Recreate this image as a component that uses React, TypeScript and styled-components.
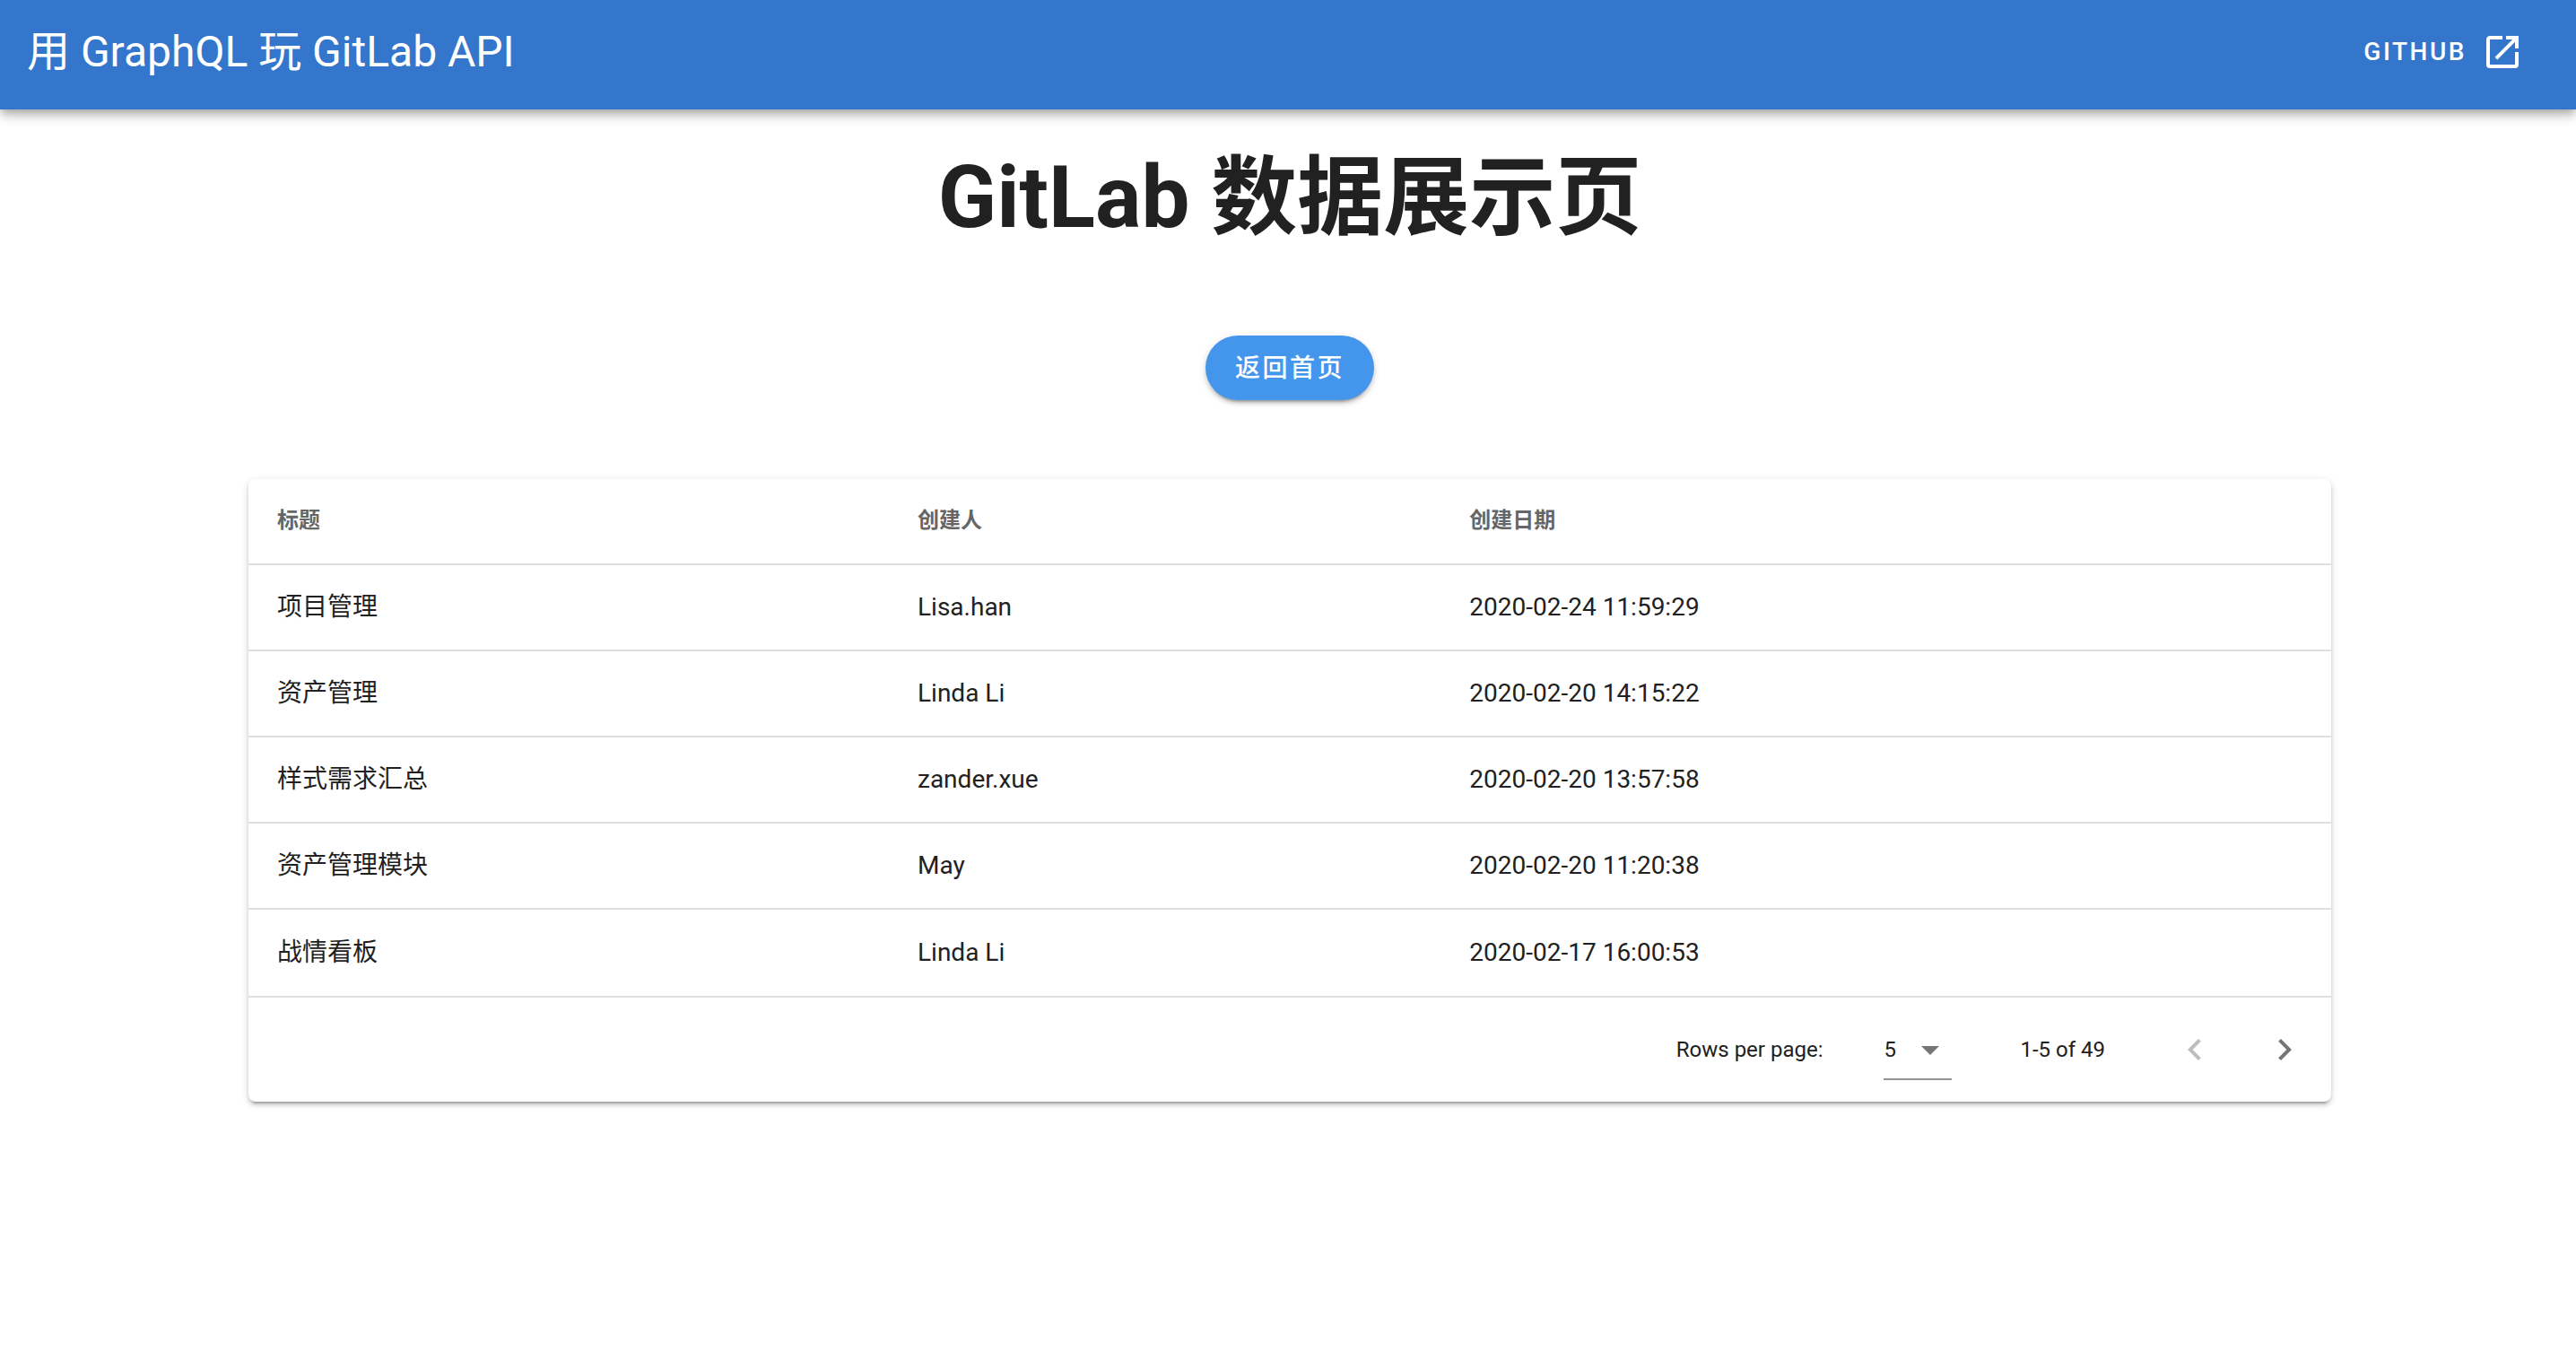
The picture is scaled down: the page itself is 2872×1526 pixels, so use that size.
import React, { useState } from "react";
import styled, { createGlobalStyle } from "styled-components";

const GlobalStyle = createGlobalStyle`
  *, *::before, *::after { box-sizing: border-box; }
  body {
    margin: 0;
    background: #fff;
    color: #212121;
    font-family: Roboto, "Noto Sans CJK SC", sans-serif;
    font-size: 28px;
    line-height: 42px;
  }
`;

const AppBar = styled.header`
  display: flex;
  align-items: center;
  justify-content: space-between;
  height: 122px;
  padding: 0 26px 6px 30px;
  background: #3476cc;
  color: #fff;
  box-shadow:
    0 4px 8px -2px rgba(0, 0, 0, 0.2),
    0 8px 10px 0 rgba(0, 0, 0, 0.14),
    0 2px 20px 0 rgba(0, 0, 0, 0.12);
`;

const AppTitle = styled.div`
  font-size: 48px;
  line-height: 64px;
  font-weight: 400;
`;

const BarLink = styled.a`
  display: flex;
  align-items: center;
  gap: 16px;
  height: 72px;
  padding: 0 32px;
  color: inherit;
  font-weight: 500;
  letter-spacing: 0.09em;
  text-decoration: none;
  text-transform: uppercase;
`;

const Icon = styled.svg`
  display: block;
  width: 48px;
  height: 48px;
  fill: currentColor;
`;

const Main = styled.main`
  display: flex;
  flex-direction: column;
  align-items: center;
  padding: 26px 24px 24px 28px;
`;

const PageTitle = styled.h1`
  margin: 0;
  font-size: 96px;
  line-height: 144px;
  font-weight: 700;
  text-align: center;
`;

const HomeButton = styled.button`
  min-width: 188px;
  height: 72px;
  margin: 82px 0 88px;
  padding: 2px 32px 0;
  border: 0;
  border-radius: 36px;
  background: #4496ec;
  color: #fff;
  font: inherit;
  font-weight: 500;
  letter-spacing: 0.09em;
  cursor: pointer;
  box-shadow:
    0 6px 2px -4px rgba(0, 0, 0, 0.2),
    0 4px 4px 0 rgba(0, 0, 0, 0.14),
    0 2px 10px 0 rgba(0, 0, 0, 0.12);
`;

const Card = styled.section`
  width: 100%;
  max-width: 2322px;
  border-radius: 8px;
  background: #fff;
  box-shadow:
    0 6px 2px -4px rgba(0, 0, 0, 0.2),
    0 4px 4px 0 rgba(0, 0, 0, 0.14),
    0 2px 10px 0 rgba(0, 0, 0, 0.12);
`;

const Table = styled.table`
  width: 100%;
  table-layout: fixed;
  border-spacing: 0;
`;

const HeadCell = styled.th<{ $width?: string }>`
  width: ${(p) => p.$width ?? "auto"};
  height: 96px;
  padding: 0 32px 2px;
  border-bottom: 2px solid #e0e0e0;
  color: #666;
  font-size: 24px;
  font-weight: 700;
  text-align: left;
`;

const Cell = styled.td`
  height: 96px;
  padding: 0 32px;
  border-bottom: 2px solid #e0e0e0;

  tr:last-child > & {
    border-bottom: 0;
  }
`;

const Footer = styled.footer`
  display: flex;
  align-items: center;
  justify-content: flex-end;
  height: 118px;
  padding: 0 16px;
  border-top: 2px solid #e0e0e0;
  font-size: 24px;
  line-height: 36px;
`;

const SelectBox = styled.div`
  position: relative;
  width: 76px;
  height: 68px;
  margin: 0 28px 0 68px;
  border: solid transparent;
  border-width: 2px 0;
  border-bottom-color: #949494;
`;

const Select = styled.select`
  width: 100%;
  height: 100%;
  padding: 0;
  border: 0;
  outline: 0;
  appearance: none;
  background: transparent;
  color: inherit;
  font: inherit;
`;

const SelectArrow = styled(Icon)`
  position: absolute;
  top: 8px;
  right: 0;
  color: #757575;
  pointer-events: none;
`;

const Range = styled.span`
  margin: 0 64px 0 48px;
`;

const Pager = styled.div`
  display: flex;
  gap: 28px;
`;

const PagerButton = styled.button`
  display: flex;
  align-items: center;
  justify-content: center;
  width: 72px;
  height: 72px;
  padding: 0;
  border: 0;
  border-radius: 50%;
  background: transparent;
  color: #757575;
  cursor: pointer;

  &:disabled {
    color: #bdbdbd;
    cursor: default;
  }
`;

const projects = [
  { title: "项目管理", author: "Lisa.han", created: "2020-02-24 11:59:29" },
  { title: "资产管理", author: "Linda Li", created: "2020-02-20 14:15:22" },
  { title: "样式需求汇总", author: "zander.xue", created: "2020-02-20 13:57:58" },
  { title: "资产管理模块", author: "May", created: "2020-02-20 11:20:38" },
  { title: "战情看板", author: "Linda Li", created: "2020-02-17 16:00:53" },
];

export default function App() {
  const [pageSize, setPageSize] = useState("5");

  return (
    <>
      <GlobalStyle />
      <AppBar>
        <AppTitle>用 GraphQL 玩 GitLab API</AppTitle>
        <BarLink href="#github">
          <span>GitHub</span>
          <Icon viewBox="0 0 24 24" aria-hidden="true">
            <path d="M14,3V5H17.59L7.76,14.83L9.17,16.24L19,6.41V10H21V3M19,19H5V5H12V3H5C3.89,3 3,3.9 3,5V19A2,2 0 0,0 5,21H19A2,2 0 0,0 21,19V12H19V19Z" />
          </Icon>
        </BarLink>
      </AppBar>
      <Main>
        <PageTitle>GitLab 数据展示页</PageTitle>
        <HomeButton type="button">返回首页</HomeButton>
        <Card>
          <Table>
            <thead>
              <tr>
                <HeadCell scope="col" $width="30.75%">标题</HeadCell>
                <HeadCell scope="col" $width="26.5%">创建人</HeadCell>
                <HeadCell scope="col">创建日期</HeadCell>
              </tr>
            </thead>
            <tbody>
              {projects.map((p) => (
                <tr key={p.created}>
                  <Cell>{p.title}</Cell>
                  <Cell>{p.author}</Cell>
                  <Cell>{p.created}</Cell>
                </tr>
              ))}
            </tbody>
          </Table>
          <Footer>
            <label htmlFor="page-size">Rows per page:</label>
            <SelectBox>
              <Select id="page-size" value={pageSize} onChange={(e) => setPageSize(e.target.value)}>
                <option value="5">5</option>
                <option value="10">10</option>
                <option value="15">15</option>
              </Select>
              <SelectArrow viewBox="0 0 24 24" aria-hidden="true">
                <path d="M7,10L12,15L17,10H7Z" />
              </SelectArrow>
            </SelectBox>
            <Range>1-5 of 49</Range>
            <Pager>
              <PagerButton type="button" aria-label="Previous page" disabled>
                <Icon viewBox="0 0 24 24" aria-hidden="true">
                  <path d="M15.41,16.58L10.83,12L15.41,7.41L14,6L8,12L14,18L15.41,16.58Z" />
                </Icon>
              </PagerButton>
              <PagerButton type="button" aria-label="Next page">
                <Icon viewBox="0 0 24 24" aria-hidden="true">
                  <path d="M8.59,16.58L13.17,12L8.59,7.41L10,6L16,12L10,18L8.59,16.58Z" />
                </Icon>
              </PagerButton>
            </Pager>
          </Footer>
        </Card>
      </Main>
    </>
  );
}
